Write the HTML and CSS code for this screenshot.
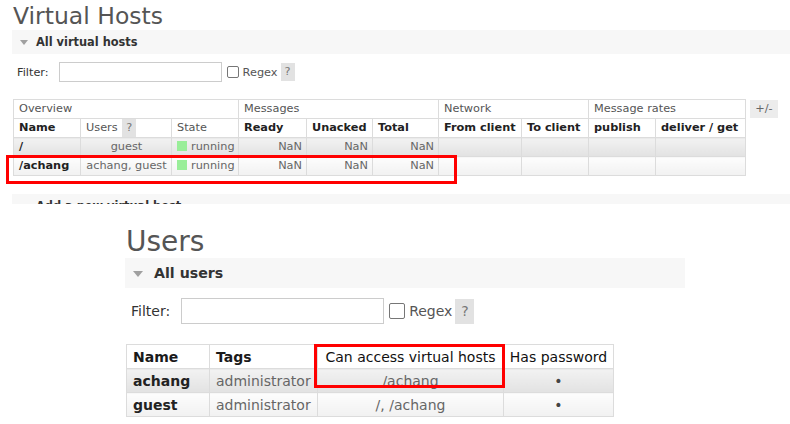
FILE: index.html
```html
<!DOCTYPE html>
<html>
<head>
<meta charset="utf-8">
<link rel="stylesheet" href="styles.css">
</head>
<body>
<div class="shot shot-vhosts">
  <h1 class="page-title">Virtual Hosts</h1>
  <div class="section-bar"><span class="tri"></span><span>All virtual hosts</span></div>
  <div class="filter-row">
    <span class="filter-label">Filter:</span>
    <input class="filter-input" type="text">
    <input class="chk" type="checkbox">
    <span class="regex">Regex</span>
    <span class="help">?</span>
  </div>
  <div class="table-wrap">
    <table class="list vhosts">
      <colgroup>
        <col class="w67"><col class="w91"><col class="w67"><col class="w68"><col class="w66"><col class="w66"><col class="w83"><col class="w67"><col class="w67"><col class="w90">
      </colgroup>
      <tr class="group-row">
        <th colspan="3">Overview</th>
        <th colspan="3">Messages</th>
        <th colspan="2">Network</th>
        <th colspan="2">Message rates</th>
      </tr>
      <tr class="head-row">
        <th>Name</th>
        <th class="plain">Users <span class="help in-head">?</span></th>
        <th class="plain">State</th>
        <th>Ready</th>
        <th>Unacked</th>
        <th>Total</th>
        <th>From client</th>
        <th>To client</th>
        <th>publish</th>
        <th>deliver / get</th>
      </tr>
      <tr class="alt1">
        <td class="name">/</td>
        <td class="c">guest</td>
        <td><span class="state-dot"></span>running</td>
        <td class="r">NaN</td>
        <td class="r">NaN</td>
        <td class="r">NaN</td>
        <td></td><td></td><td></td><td></td>
      </tr>
      <tr class="alt2">
        <td class="name">/achang</td>
        <td class="c">achang, guest</td>
        <td><span class="state-dot"></span>running</td>
        <td class="r">NaN</td>
        <td class="r">NaN</td>
        <td class="r">NaN</td>
        <td></td><td></td><td></td><td></td>
      </tr>
    </table>
    <span class="toggle">+/-</span>
  </div>
  <div class="section-bar next"><span class="tri"></span><span>Add a new virtual host</span></div>
  <div class="highlight hl-vhost"></div>
</div>

<div class="shot shot-users">
  <h1 class="page-title">Users</h1>
  <div class="section-bar"><span class="tri"></span><span>All users</span></div>
  <div class="filter-row">
    <span class="filter-label">Filter:</span>
    <input class="filter-input" type="text">
    <input class="chk" type="checkbox">
    <span class="regex">Regex</span>
    <span class="help">?</span>
  </div>
  <table class="list users">
    <colgroup>
      <col class="u83"><col class="u108"><col class="u186"><col class="u110">
    </colgroup>
    <tr class="head-row">
      <th>Name</th>
      <th>Tags</th>
      <th class="plain-dark c">Can access virtual hosts</th>
      <th class="plain-dark c">Has password</th>
    </tr>
    <tr class="alt1">
      <td class="name">achang</td>
      <td>administrator</td>
      <td class="c">/achang</td>
      <td class="c dot">&bull;</td>
    </tr>
    <tr class="alt2">
      <td class="name">guest</td>
      <td>administrator</td>
      <td class="c">/, /achang</td>
      <td class="c dot">&bull;</td>
    </tr>
  </table>
  <div class="highlight hl-users"></div>
</div>
</body>
</html>
```

FILE: styles.css
```css
html, body {
  margin: 0;
  padding: 0;
  background: #fff;
}
body {
  font-family: "DejaVu Sans", Verdana, sans-serif;
  color: #555;
  width: 790px;
  height: 424px;
  overflow: hidden;
}

.shot {
  position: relative;
}

/* ---------- top shot: virtual hosts ---------- */
.shot-vhosts {
  height: 204px;
  overflow: hidden;
  padding-left: 12px;
  font-size: 11.3px;
}
.shot-vhosts .page-title {
  margin: 0 0 0 1px;
  padding-top: 3px;
  font-size: 23.5px;
  line-height: 27px;
  font-weight: normal;
  color: #555;
}
.section-bar {
  display: flex;
  align-items: center;
  background: #f7f7f7;
  font-weight: bold;
  color: #333;
}
.shot-vhosts .section-bar {
  height: 24px;
  padding-left: 8px;
  gap: 8px;
  font-size: 11.4px;
}
.tri {
  width: 0;
  height: 0;
  border-left: 4.5px solid transparent;
  border-right: 4.5px solid transparent;
  border-top: 5px solid #a0a0a0;
  margin-top: 1px;
}
.shot-vhosts .section-bar.next {
  margin-top: 18px;
}

.filter-row {
  display: flex;
  align-items: center;
}
.shot-vhosts .filter-row {
  margin-top: 8px;
  padding-left: 5px;
  height: 20px;
}
.filter-label {
  color: #333;
}
.filter-input {
  box-sizing: border-box;
  border: 1px solid #ccc;
  background: #fff;
  padding: 0;
  outline: none;
}
.shot-vhosts .filter-input {
  width: 163px;
  height: 20px;
  margin: 0 0 0 10px;
}
.chk {
  appearance: none;
  -webkit-appearance: none;
  box-sizing: border-box;
  border: 1px solid #767676;
  border-radius: 2px;
  background: #fff;
  margin: 0;
}
.shot-vhosts .chk {
  width: 12px;
  height: 12px;
  margin-left: 5px;
}
.regex {
  color: #555;
}
.shot-vhosts .regex {
  margin-left: 4px;
}
.help {
  display: inline-block;
  background: #e2e2e2;
  color: #777;
  text-align: center;
}
.shot-vhosts .help {
  width: 14px;
  height: 18px;
  line-height: 18px;
  margin-left: 3px;
}
.shot-vhosts .help.in-head {
  margin-left: 1px;
  vertical-align: top;
}

.table-wrap {
  display: flex;
  align-items: flex-start;
  gap: 4px;
  margin-top: 17px;
  margin-left: 1px;
}

table.list {
  border-collapse: collapse;
  table-layout: fixed;
}
table.list th, table.list td {
  border: 1px solid #dcdcdc;
  white-space: nowrap;
  overflow: hidden;
}
table.list th {
  text-align: left;
  background: #fff;
}

.vhosts {
  width: 733px;
}
.vhosts th, .vhosts td {
  height: 19px;
  padding: 0 4px 0 5px;
  line-height: 18px;
  box-sizing: border-box;
}
.vhosts .group-row th {
  font-weight: normal;
  color: #555;
}
.vhosts .head-row th {
  font-weight: bold;
  color: #222;
}
.vhosts .head-row th.plain {
  font-weight: normal;
  color: #555;
}
.vhosts td {
  color: #666;
}
.w67 { width: 67px; }
.w91 { width: 91px; }
.w68 { width: 68px; }
.w66 { width: 66px; }
.w83 { width: 83px; }
.w90 { width: 90px; }

.alt1 td {
  background: linear-gradient(#f2f2f2, #e2e2e2);
}
.alt2 td {
  background: linear-gradient(#fdfdfd, #f1f1f1);
}
td.name {
  font-weight: bold;
  color: #222 !important;
}
.c { text-align: center !important; }
.r { text-align: right; }

.state-dot {
  display: inline-block;
  width: 10px;
  height: 10px;
  background: #99ee99;
  margin-right: 4px;
  vertical-align: -1px;
}

.toggle {
  display: inline-block;
  margin-top: 1px;
  width: 28px;
  height: 18px;
  line-height: 18px;
  text-align: center;
  background: #ececec;
  color: #666;
}

.highlight {
  position: absolute;
  box-sizing: border-box;
  border: 3px solid #f00;
  pointer-events: none;
}
.hl-vhost {
  left: 6px;
  top: 155px;
  width: 451px;
  height: 29px;
}

/* ---------- bottom shot: users ---------- */
.shot-users {
  margin-left: 125px;
  width: 560px;
  font-size: 14px;
}
.shot-users .page-title {
  margin: 0 0 0 1px;
  padding-top: 22px;
  font-size: 28px;
  line-height: 32px;
  font-weight: normal;
  color: #555;
}
.shot-users .section-bar {
  height: 30px;
  padding-left: 8px;
  gap: 11px;
  font-size: 14.2px;
}
.shot-users .tri {
  border-left-width: 5.5px;
  border-right-width: 5.5px;
  border-top-width: 6px;
}
.shot-users .filter-row {
  margin-top: 10px;
  padding-left: 6px;
  height: 26px;
}
.shot-users .filter-input {
  width: 203px;
  height: 26px;
  margin-left: 11px;
}
.shot-users .chk {
  width: 16px;
  height: 16px;
  margin-left: 5px;
}
.shot-users .regex {
  margin-left: 4px;
}
.shot-users .help {
  width: 19px;
  height: 25px;
  line-height: 25px;
  margin-left: 3px;
}

.users {
  width: 488px;
  margin-top: 20px;
  margin-left: 1px;
}
.users th, .users td {
  height: 24px;
  padding: 0 6px;
  box-sizing: border-box;
  line-height: 20px;
}
.users th {
  font-weight: bold;
  color: #1a1a1a;
}
.users th.plain-dark {
  font-weight: normal;
  color: #111;
  padding: 0 4px;
}
.users td {
  color: #666;
}
.users td.dot {
  color: #444;
}
.u83 { width: 83px; }
.u108 { width: 108px; }
.u186 { width: 186px; }
.u110 { width: 110px; }

.hl-users {
  left: 189px;
  top: 140px;
  width: 191px;
  height: 44px;
}
```
